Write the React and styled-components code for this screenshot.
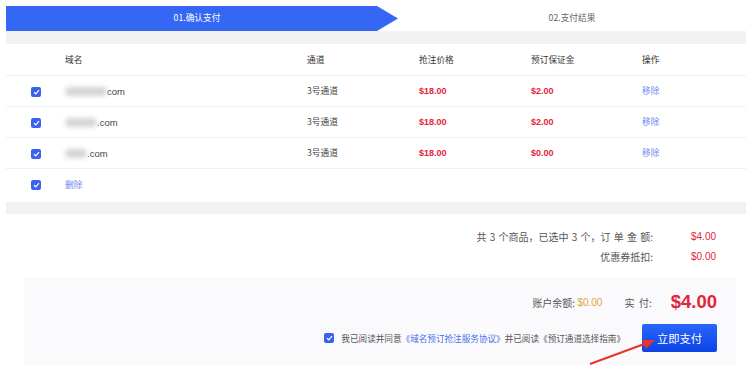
import React from 'react'
import styled, { createGlobalStyle } from 'styled-components'

const GlobalStyle = createGlobalStyle`
  html, body {
    margin: 0;
    padding: 0;
    background: #fff;
  }
  body {
    font-family: 'Noto Sans CJK SC', 'Liberation Sans', sans-serif;
    color: #333;
  }
`

const Page = styled.div`
  position: relative;
  width: 746px;
  height: 367px;
  padding: 6px 0 0 6px;
  box-sizing: border-box;
  overflow: hidden;
`

const Steps = styled.div`
  display: flex;
  height: 25px;
`

const Step = styled.div`
  flex: ${(p) => (p.active ? '0 0 382px' : '1')};
  display: flex;
  align-items: center;
  justify-content: center;
  font-size: 8.7px;
  line-height: 1;
  color: ${(p) => (p.active ? '#fff' : '#666')};
  background: ${(p) => (p.active ? '#3467f4' : '#fff')};
  clip-path: ${(p) =>
    p.active ? 'polygon(0 0, 371px 0, 100% 50%, 371px 100%, 0 100%)' : 'none'};
  padding-right: ${(p) => (p.active ? '10px' : '0')};
`

const Band = styled.div`
  height: ${(p) => p.h}px;
  margin-top: ${(p) => p.mt || 0}px;
  background: #f2f2f2;
`

const Row = styled.div`
  display: grid;
  grid-template-columns: 59px 242px 112px 112px 111px 1fr;
  align-items: center;
  height: ${(p) => (p.head ? 32 : 31)}px;
  padding-top: ${(p) => (p.head ? 2 : 1)}px;
  border-bottom: ${(p) => (p.last ? 'none' : '1px solid #f0f0f0')};
  box-sizing: border-box;
  font-size: 8.7px;
  line-height: 1;
  color: ${(p) => (p.head ? '#333' : '#444')};
`

const Cell = styled.div`
  display: flex;
  align-items: center;
`

const Box = styled.span`
  display: inline-flex;
  align-items: center;
  justify-content: center;
  width: 10px;
  height: 10px;
  border-radius: 2px;
  background: #3b62ee;
  margin-left: ${(p) => p.ml || 0}px;
`

const Price = styled.span`
  color: #e3243b;
  font-weight: 700;
  font-family: 'Liberation Sans', sans-serif;
  font-size: 9px;
`

const Link = styled.span`
  color: ${(p) => (p.soft ? '#6b86ee' : '#4a72ea')};
`

const Blur = styled.span`
  display: inline-block;
  width: ${(p) => p.w}px;
  height: 9px;
  background: #d4d4d4;
  filter: blur(2.5px);
  border-radius: 5px;
`

const Domain = styled.span`
  font-family: 'Liberation Sans', sans-serif;
  font-size: 9.5px;
  color: #444;
`

const Summary = styled.div`
  display: grid;
  grid-template-columns: 1fr 55px;
  row-gap: 10px;
  column-gap: 38px;
  padding: 18px 0 15px;
  font-size: 10px;
  line-height: 10px;
  color: #555;
`

const Label = styled.div`
  text-align: right;
  word-spacing: 1px;
`

const Value = styled.div`
  color: #e3243b;
  font-family: 'Liberation Sans', sans-serif;
`

const Panel = styled.div`
  margin: 0 10px 0 18px;
  height: 88px;
  background: #fafafc;
  padding: 15px 19px 0 0;
  box-sizing: border-box;
  display: flex;
  flex-direction: column;
  align-items: flex-end;
`

const PayLine = styled.div`
  display: flex;
  align-items: center;
  font-size: 10px;
  color: #555;
  height: 20px;
`

const Balance = styled.span`
  color: #e2a53a;
  font-family: 'Liberation Sans', sans-serif;
  margin-right: 22px;
`

const Total = styled.span`
  color: #e3243b;
  font-family: 'Liberation Sans', sans-serif;
  font-weight: 700;
  font-size: 18.5px;
  margin-left: 19px;
`

const AgreeLine = styled.div`
  display: flex;
  align-items: center;
  margin-top: 12px;
  font-size: 8.6px;
  color: #555;
`

const AgreeText = styled.span`
  margin: 0 17px 0 7px;
`

const PayButton = styled.button`
  width: 75px;
  height: 28px;
  border: none;
  border-radius: 2px;
  background: linear-gradient(#2a66fb, #0b43e6);
  color: #fff;
  font-family: 'Noto Sans CJK SC', sans-serif;
  font-size: 11.3px;
  padding: 0;
`

const Arrow = styled.svg`
  position: absolute;
  left: 585px;
  top: 330px;
`

const Check = ({ ml }) => (
  <Box ml={ml}>
    <svg width='7' height='6' viewBox='0 0 7 6'>
      <path d='M1 3.2 L2.8 4.8 L6 1.2' stroke='#fff' strokeWidth='1.2' fill='none' />
    </svg>
  </Box>
)

const rows = [
  { blur: 42, name: 'com', fee: '$2.00' },
  { blur: 32, name: '.com', fee: '$2.00' },
  { blur: 22, name: '.com', fee: '$0.00' },
]

const App = () => {
  return (
    <Page>
      <GlobalStyle />
      <Steps>
        <Step active>01.确认支付</Step>
        <Step>02.支付结果</Step>
      </Steps>
      <Band h={13} />
      <Row head>
        <Cell />
        <Cell>域名</Cell>
        <Cell>通道</Cell>
        <Cell>抢注价格</Cell>
        <Cell>预订保证金</Cell>
        <Cell>操作</Cell>
      </Row>
      {rows.map((r, i) => (
        <Row key={i}>
          <Cell>
            <Check ml={25} />
          </Cell>
          <Cell>
            <Blur w={r.blur} />
            <Domain>{r.name}</Domain>
          </Cell>
          <Cell>3号通道</Cell>
          <Cell>
            <Price>$18.00</Price>
          </Cell>
          <Cell>
            <Price>{r.fee}</Price>
          </Cell>
          <Cell>
            <Link soft>移除</Link>
          </Cell>
        </Row>
      ))}
      <Row last>
        <Cell>
          <Check ml={25} />
        </Cell>
        <Cell>
          <Link soft>删除</Link>
        </Cell>
      </Row>
      <Band h={12} mt={2} />
      <Summary>
        <Label>共 3 个商品，已选中 3 个，订 单 金 额:</Label>
        <Value>$4.00</Value>
        <Label>优惠券抵扣:</Label>
        <Value>$0.00</Value>
      </Summary>
      <Panel>
        <PayLine>
          账户余额:&nbsp;<Balance>$0.00</Balance>实&nbsp;&nbsp;付:
          <Total>$4.00</Total>
        </PayLine>
        <AgreeLine>
          <Check />
          <AgreeText>
            我已阅读并同意<Link>《域名预订抢注服务协议》</Link>并已阅读《预订通道选择指南》
          </AgreeText>
          <PayButton>立即支付</PayButton>
        </AgreeLine>
      </Panel>
      <Arrow width='80' height='40' viewBox='0 0 80 40'>
        <line x1='5' y1='34' x2='62' y2='13' stroke='#e8352a' strokeWidth='2' />
        <polygon points='70,10 57,10 61,19' fill='#e8352a' />
      </Arrow>
    </Page>
  )
}

export default App
